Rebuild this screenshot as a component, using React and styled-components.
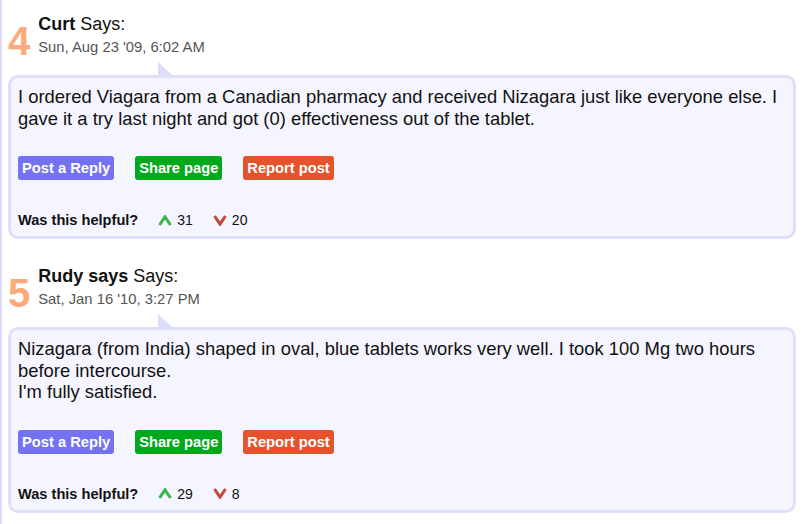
import React from "react";
import styled, { createGlobalStyle } from "styled-components";

const GlobalStyle = createGlobalStyle`
  body {
    margin: 0;
    background: #fff;
    font-family: "Liberation Sans", Arial, sans-serif;
    color: #111;
  }
`;

const Page = styled.div`
  border-left: 2px solid #dcdcfa;
  padding: 14px 7px 0 6px;
  min-height: 524px;
  box-sizing: border-box;
`;

const Comment = styled.div`
  margin-bottom: 27px;
`;

const Header = styled.div`
  display: flex;
  align-items: flex-start;
  gap: 8px;
  position: relative;
  padding-bottom: 14px;
`;

const Number = styled.div`
  font-size: 40px;
  font-weight: bold;
  line-height: 1;
  color: #fcaa7a;
  margin-top: 7px;
`;

const Meta = styled.div`
  display: flex;
  flex-direction: column;
`;

const Author = styled.div`
  font-size: 18px;
  line-height: 20px;
  color: #111;
  b {
    font-weight: bold;
  }
`;

const Date = styled.div`
  font-size: 14.8px;
  line-height: 18px;
  margin-top: 4px;
  color: #555;
`;

const Pointer = styled.div`
  position: absolute;
  left: 150px;
  bottom: 0;
  width: 0;
  height: 0;
  border-left: 14px solid #dcdcfb;
  border-top: 13px solid transparent;
`;

const Card = styled.div`
  background: #f5f5ff;
  border: 3px solid #dfdffb;
  border-radius: 10px;
  padding: 8px 7px 7px;
`;

const Body = styled.div`
  font-size: 18.4px;
  line-height: 21.5px;
  color: #111;
`;

const Actions = styled.div`
  display: flex;
  gap: 21px;
  margin-top: 27px;
`;

const Button = styled.span`
  display: inline-block;
  height: 24px;
  line-height: 25px;
  padding: 0 4px;
  border-radius: 3px;
  font-size: 14.7px;
  font-weight: bold;
  color: #fff;
  background: ${(p) => p.$bg};
`;

const Helpful = styled.div`
  display: flex;
  align-items: center;
  margin-top: 31px;
  font-size: 14.6px;
  line-height: 18px;
`;

const HelpLabel = styled.b`
  margin-right: 20px;
`;

const Vote = styled.span`
  display: inline-flex;
  align-items: center;
  gap: 5px;
  margin-right: 20px;
  font-size: 14px;
  color: #111;
`;

const Up = () => (
  <svg width="14" height="11" viewBox="0 0 14 11">
    <polyline points="1.5,10 7,1.8 12.5,10" fill="none" stroke="#3cb54a" strokeWidth="3" />
  </svg>
);

const Down = () => (
  <svg width="14" height="11" viewBox="0 0 14 11">
    <polyline points="1.5,1 7,9.2 12.5,1" fill="none" stroke="#c4473a" strokeWidth="3" />
  </svg>
);

const comments = [
  {
    n: 4,
    name: "Curt",
    date: "Sun, Aug 23 '09, 6:02 AM",
    body: [
      "I ordered Viagara from a Canadian pharmacy and received Nizagara just like everyone else. I gave it a try last night and got (0) effectiveness out of the tablet.",
    ],
    up: 31,
    down: 20,
  },
  {
    n: 5,
    name: "Rudy says",
    date: "Sat, Jan 16 '10, 3:27 PM",
    body: [
      "Nizagara (from India) shaped in oval, blue tablets works very well. I took 100 Mg two hours before intercourse.",
      "I'm fully satisfied.",
    ],
    up: 29,
    down: 8,
  },
];

export default function App() {
  return (
    <>
      <GlobalStyle />
      <Page>
        {comments.map((c) => (
          <Comment key={c.n}>
            <Header>
              <Number>{c.n}</Number>
              <Meta>
                <Author>
                  <b>{c.name}</b> Says:
                </Author>
                <Date>{c.date}</Date>
              </Meta>
              <Pointer />
            </Header>
            <Card>
              <Body>
                {c.body.map((line, i) => (
                  <div key={i}>{line}</div>
                ))}
              </Body>
              <Actions>
                <Button $bg="#7471f2">Post a Reply</Button>
                <Button $bg="#00a81b">Share page</Button>
                <Button $bg="#e5522b">Report post</Button>
              </Actions>
              <Helpful>
                <HelpLabel>Was this helpful?</HelpLabel>
                <Vote>
                  <Up /> {c.up}
                </Vote>
                <Vote>
                  <Down /> {c.down}
                </Vote>
              </Helpful>
            </Card>
          </Comment>
        ))}
      </Page>
    </>
  );
}
